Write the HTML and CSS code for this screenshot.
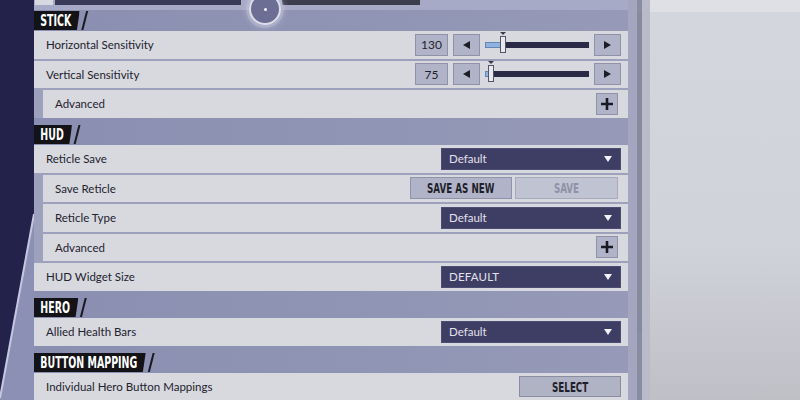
FILE: index.html
```html
<html>
  <head>
    <title>Controls</title>
    <link rel="stylesheet" href="styles.css">
  </head>
  <body>
    <div class="screen">
      <div class="edge">
        <svg width="34" height="400" viewBox="0 0 34 400">
          <polygon points="34,214 34,400 0,400 0,398" fill="#8d90b5"/>
          <line x1="34" y1="214" x2="0" y2="398" stroke="#c6c8e2" stroke-width="2"/>
        </svg>
      </div>

      <div class="panel">
        <div class="topbar">
          <span class="tb-chip"></span>
          <span class="tb-bar"></span>
          <span class="tb-bar tb-bar-2"></span>
        </div>
        <div class="knob"><span></span></div>

        <!-- stick -->
        <div class="group-head group-head-first">
          <div class="label"><span class="tag">STICK</span><span class="slash"></span></div>
        </div>
        <div class="row">
          <span class="name">Horizontal Sensitivity</span>
          <div class="stepper">
            <span class="btn value">130</span>
            <span class="btn arrow"><svg width="7" height="8"><polygon points="7,0 7,8 0,4" fill="#1d1d28"/></svg></span>
            <div class="slider">
              <div class="fill" style="width: 16px"></div>
              <div class="thumb" style="left: 15px"></div>
            </div>
            <span class="btn arrow"><svg width="7" height="8"><polygon points="0,0 7,4 0,8" fill="#1d1d28"/></svg></span>
          </div>
        </div>
        <div class="row">
          <span class="name">Vertical Sensitivity</span>
          <div class="stepper">
            <span class="btn value">75</span>
            <span class="btn arrow"><svg width="7" height="8"><polygon points="7,0 7,8 0,4" fill="#1d1d28"/></svg></span>
            <div class="slider">
              <div class="fill" style="width: 4px"></div>
              <div class="thumb" style="left: 3px"></div>
            </div>
            <span class="btn arrow"><svg width="7" height="8"><polygon points="0,0 7,4 0,8" fill="#1d1d28"/></svg></span>
          </div>
        </div>
        <div class="row row-sub">
          <span class="name">Advanced</span>
          <span class="btn plus"><svg width="12" height="12"><path d="M6 0V12M0 6H12" stroke="#1a1a24" stroke-width="2.6"/></svg></span>
        </div>

        <!-- hud -->
        <div class="group-head">
          <div class="label"><span class="tag">HUD</span><span class="slash"></span></div>
        </div>
        <div class="row">
          <span class="name">Reticle Save</span>
          <div class="select"><span>Default</span><svg width="8" height="6"><polygon points="0,0 8,0 4,6" fill="#f2f2f7"/></svg></div>
        </div>
        <div class="row row-sub">
          <span class="name">Save Reticle</span>
          <div class="pair">
            <span class="btn wide"><span class="caps">SAVE AS NEW</span></span>
            <span class="btn wide off"><span class="caps">SAVE</span></span>
          </div>
        </div>
        <div class="row row-sub">
          <span class="name">Reticle Type</span>
          <div class="select"><span>Default</span><svg width="8" height="6"><polygon points="0,0 8,0 4,6" fill="#f2f2f7"/></svg></div>
        </div>
        <div class="row row-sub">
          <span class="name">Advanced</span>
          <span class="btn plus"><svg width="12" height="12"><path d="M6 0V12M0 6H12" stroke="#1a1a24" stroke-width="2.6"/></svg></span>
        </div>
        <div class="row">
          <span class="name">HUD Widget Size</span>
          <div class="select"><span class="upper">DEFAULT</span><svg width="8" height="6"><polygon points="0,0 8,0 4,6" fill="#f2f2f7"/></svg></div>
        </div>

        <!-- hero -->
        <div class="group-head">
          <div class="label"><span class="tag">HERO</span><span class="slash"></span></div>
        </div>
        <div class="row">
          <span class="name">Allied Health Bars</span>
          <div class="select"><span>Default</span><svg width="8" height="6"><polygon points="0,0 8,0 4,6" fill="#f2f2f7"/></svg></div>
        </div>

        <!-- button mapping -->
        <div class="group-head">
          <div class="label"><span class="tag">BUTTON MAPPING</span><span class="slash"></span></div>
        </div>
        <div class="row">
          <span class="name">Individual Hero Button Mappings</span>
          <span class="btn wide pick"><span class="caps">SELECT</span></span>
        </div>
      </div>

      <div class="rail"><div class="track"></div></div>
      <div class="side"></div>
    </div>
  </body>
</html>
```

FILE: styles.css
```css
* {
  box-sizing: border-box;
}

body {
  margin: 0;
  width: 800px;
  height: 400px;
  overflow: hidden;
  background: #d3d5dc;
  font-family: Lato, "Open Sans", sans-serif;
}

.screen {
  display: flex;
  height: 400px;
}

.edge {
  width: 34px;
  flex: none;
  background: #23224a;
}

.edge svg {
  display: block;
}

/* settings panel */
.panel {
  position: relative;
  width: 594px;
  flex: none;
  background: #9ea1bb;
}

.topbar {
  display: flex;
  align-items: flex-start;
  height: 10px;
  background: #a7aac6;
}

.tb-chip {
  width: 18px;
  height: 5px;
  margin-left: 1px;
  background: #d8d9e0;
}

.tb-bar {
  width: 186px;
  height: 5px;
  margin-left: 2px;
  background: #393a58;
}

.tb-bar-2 {
  width: 138px;
  margin-left: 41px;
  background: #3c3d4d;
}

.knob {
  position: absolute;
  left: 215px;
  top: -7px;
  width: 32px;
  height: 32px;
  border-radius: 50%;
  background: #6c6e93;
  border: 2px solid #dcdeea;
  box-shadow: 0 0 0 3px rgba(190, 192, 215, 0.45), 0 0 6px 3px rgba(200, 202, 222, 0.4);
  display: flex;
  align-items: center;
  justify-content: center;
}

.knob span {
  width: 3px;
  height: 3px;
  border-radius: 50%;
  background: #ffffff;
}

/* section headers */
.group-head {
  display: flex;
  align-items: flex-end;
  height: 27.5px;
  padding-bottom: 1px;
  background: linear-gradient(90deg, #8a8eb0, #969ab8);
}

.group-head-first {
  height: 21px;
}

.label {
  display: flex;
  align-items: stretch;
  height: 19px;
  transform: scaleX(0.7);
  transform-origin: left bottom;
}

.tag {
  padding: 0 12px 0 9px;
  background: #131317;
  color: #ffffff;
  font-family: "DejaVu Sans", sans-serif;
  font-stretch: condensed;
  font-weight: bold;
  font-size: 15px;
  line-height: 20px;
  clip-path: polygon(0 0, 100% 0, calc(100% - 4px) 100%, 0 100%);
}

.slash {
  width: 3px;
  margin-left: 6px;
  background: #1b1b22;
  transform: skewX(-20deg);
}

/* rows */
.row {
  display: flex;
  align-items: center;
  justify-content: space-between;
  height: 27.5px;
  padding: 0 7px 0 12px;
  background: #d8d9df;
  color: #22222e;
  font-size: 11.5px;
}

.row + .row {
  margin-top: 2px;
}

.row-sub {
  margin-left: 9px;
}

.btn {
  display: flex;
  align-items: center;
  justify-content: center;
  height: 22px;
  background: #b1b4c8;
  border: 1px solid #8f92a8;
  color: #1f1f2b;
}

.stepper {
  display: flex;
  align-items: center;
  gap: 5px;
}

.value {
  width: 33px;
  font-size: 12px;
}

.arrow {
  width: 27px;
}

.slider {
  position: relative;
  width: 104px;
  height: 6px;
  background: #2c2b47;
}

.fill {
  height: 6px;
  background: #8eb3de;
  border: 1px solid #6586b8;
}

.thumb {
  position: absolute;
  top: -6px;
  width: 6px;
  height: 17px;
  background: #e8e8ee;
  border: 1px solid #555569;
}

.thumb::before {
  content: "";
  position: absolute;
  left: -1px;
  top: -5px;
  border-left: 3px solid transparent;
  border-right: 3px solid transparent;
  border-top: 3px solid #3a3a4e;
}

.plus {
  width: 22px;
  margin-right: 3px;
}

.select {
  display: flex;
  align-items: center;
  justify-content: space-between;
  width: 180px;
  height: 22px;
  padding: 0 8px 0 7px;
  background: #3e3d64;
  border: 1px solid #4d4c74;
  color: #e2e2ec;
  font-size: 11.5px;
}

.select .upper {
  letter-spacing: 0.2px;
}

.pair {
  display: flex;
  gap: 3px;
  margin-right: 3px;
}

.wide {
  width: 102px;
}

.off {
  width: 103px;
  background: #c0c3d1;
  border-color: #a7aabc;
  color: #8f92a6;
}

.pick {
  height: 21px;
  background: #b0b3c4;
  border-color: #8a8da2;
}

.caps {
  display: inline-block;
  font-family: "DejaVu Sans", sans-serif;
  font-stretch: condensed;
  font-weight: bold;
  font-size: 13.5px;
  transform: scaleX(0.72);
}

/* scroll rail and backdrop */
.rail {
  width: 22px;
  flex: none;
  background: linear-gradient(90deg, #a4a6c0 0 9px, #8a8ca2 9px 14px, #b9bbc9 14px);
}

.track {
  margin: 12px 0 0 9px;
  width: 5px;
  height: 321px;
  background: #878a9f;
}

.side {
  flex: 1;
  background: linear-gradient(180deg, #dfe0e5 0 12px, #d4d6dd 12px, #d1d3da 60%, #bfc0c6 100%);
}
```
